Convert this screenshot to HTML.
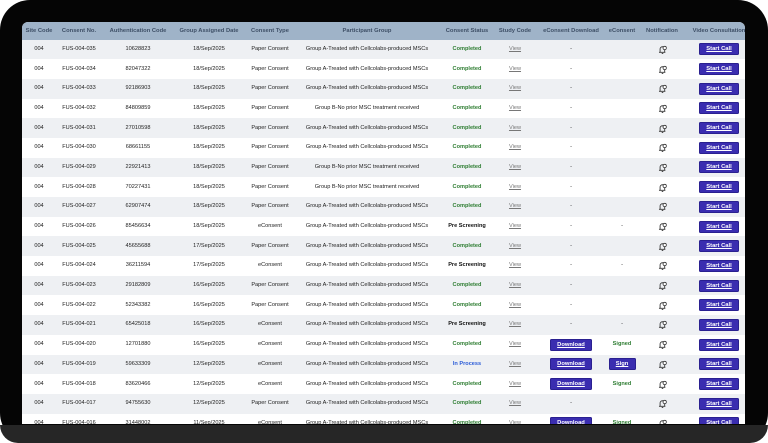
<!DOCTYPE html><html><head><meta charset="utf-8"><style>
html,body{margin:0;padding:0;width:768px;height:443px;overflow:hidden;background:#fff;font-family:"Liberation Sans",Arial,sans-serif}
.dev{position:absolute;left:0;top:0;width:768px;height:443px;background:#050505;border-radius:30px}
.bot{position:absolute;left:0;top:425px;width:768px;height:18px;background:#262626;border-radius:0 0 30px 30px}
.scr{position:absolute;left:22px;top:22px;width:723px;height:402px;overflow:hidden;background:#fff;border-radius:6px 6px 0 0}
table{border-collapse:collapse;table-layout:fixed;width:728px}
th{background:#9fb3c8;color:#3e4f66;font-size:5.8px;font-weight:bold;height:17.5px;line-height:6px;padding:0;text-align:center;white-space:nowrap}
td{font-size:5.6px;line-height:7px;color:#222;height:19.7px;padding:0;text-align:center;white-space:nowrap;overflow:visible;border:0;box-sizing:border-box}
tr:nth-child(even) td{background:#eef0f3}
.c{color:#2e7d32;font-weight:bold}.p{color:#111;font-weight:bold}.i{color:#2a5bd7;font-weight:bold}
.v{color:#777;text-decoration:underline}
.b{display:inline-block;background:#3a2db0;color:#fff;font-weight:bold;text-decoration:underline;height:10px;line-height:10px;border-radius:1.5px;border:0.5px solid #2a2090;font-size:5.8px}
.sc{width:38px}.dl{width:40px}.sg{width:25px}
.s{color:#2e7d32;font-weight:bold}
svg{vertical-align:middle}
</style></head><body><div class="dev"></div><div class="bot"></div><div class="scr"><table>
<colgroup><col style="width:34px"><col style="width:46px"><col style="width:72px"><col style="width:70px"><col style="width:52px"><col style="width:142px"><col style="width:58px"><col style="width:38px"><col style="width:74px"><col style="width:28px"><col style="width:52px"><col style="width:62px"></colgroup>
<tr><th>Site Code</th><th>Consent No.</th><th>Authentication Code</th><th>Group Assigned Date</th><th>Consent Type</th><th>Participant Group</th><th>Consent Status</th><th>Study Code</th><th>eConsent Download</th><th>eConsent</th><th>Notification</th><th>Video Consultation</th></tr>
<tr><td>004</td><td>FUS-004-035</td><td>10628823</td><td>18/Sep/2025</td><td>Paper Consent</td><td>Group A-Treated with Cellcolabs-produced MSCs</td><td class="c">Completed</td><td class="v">View</td><td>-</td><td></td><td><svg width="11" height="11" viewBox="0 0 10 10"><path d="M1.8 7.6h5.8M2.8 7.6V4.6a2.1 2.1 0 0 1 4.2 0v3M4.3 8.7h1.4" fill="none" stroke="#333" stroke-width="0.8"/><circle cx="7" cy="3.6" r="1.5" fill="#fff" stroke="#333" stroke-width="0.7"/></svg></td><td><span class="b sc">Start Call</span></td></tr>
<tr><td>004</td><td>FUS-004-034</td><td>82047322</td><td>18/Sep/2025</td><td>Paper Consent</td><td>Group A-Treated with Cellcolabs-produced MSCs</td><td class="c">Completed</td><td class="v">View</td><td>-</td><td></td><td><svg width="11" height="11" viewBox="0 0 10 10"><path d="M1.8 7.6h5.8M2.8 7.6V4.6a2.1 2.1 0 0 1 4.2 0v3M4.3 8.7h1.4" fill="none" stroke="#333" stroke-width="0.8"/><circle cx="7" cy="3.6" r="1.5" fill="#fff" stroke="#333" stroke-width="0.7"/></svg></td><td><span class="b sc">Start Call</span></td></tr>
<tr><td>004</td><td>FUS-004-033</td><td>92186903</td><td>18/Sep/2025</td><td>Paper Consent</td><td>Group A-Treated with Cellcolabs-produced MSCs</td><td class="c">Completed</td><td class="v">View</td><td>-</td><td></td><td><svg width="11" height="11" viewBox="0 0 10 10"><path d="M1.8 7.6h5.8M2.8 7.6V4.6a2.1 2.1 0 0 1 4.2 0v3M4.3 8.7h1.4" fill="none" stroke="#333" stroke-width="0.8"/><circle cx="7" cy="3.6" r="1.5" fill="#fff" stroke="#333" stroke-width="0.7"/></svg></td><td><span class="b sc">Start Call</span></td></tr>
<tr><td>004</td><td>FUS-004-032</td><td>84809859</td><td>18/Sep/2025</td><td>Paper Consent</td><td>Group B-No prior MSC treatment received</td><td class="c">Completed</td><td class="v">View</td><td>-</td><td></td><td><svg width="11" height="11" viewBox="0 0 10 10"><path d="M1.8 7.6h5.8M2.8 7.6V4.6a2.1 2.1 0 0 1 4.2 0v3M4.3 8.7h1.4" fill="none" stroke="#333" stroke-width="0.8"/><circle cx="7" cy="3.6" r="1.5" fill="#fff" stroke="#333" stroke-width="0.7"/></svg></td><td><span class="b sc">Start Call</span></td></tr>
<tr><td>004</td><td>FUS-004-031</td><td>27010598</td><td>18/Sep/2025</td><td>Paper Consent</td><td>Group A-Treated with Cellcolabs-produced MSCs</td><td class="c">Completed</td><td class="v">View</td><td>-</td><td></td><td><svg width="11" height="11" viewBox="0 0 10 10"><path d="M1.8 7.6h5.8M2.8 7.6V4.6a2.1 2.1 0 0 1 4.2 0v3M4.3 8.7h1.4" fill="none" stroke="#333" stroke-width="0.8"/><circle cx="7" cy="3.6" r="1.5" fill="#fff" stroke="#333" stroke-width="0.7"/></svg></td><td><span class="b sc">Start Call</span></td></tr>
<tr><td>004</td><td>FUS-004-030</td><td>68661155</td><td>18/Sep/2025</td><td>Paper Consent</td><td>Group A-Treated with Cellcolabs-produced MSCs</td><td class="c">Completed</td><td class="v">View</td><td>-</td><td></td><td><svg width="11" height="11" viewBox="0 0 10 10"><path d="M1.8 7.6h5.8M2.8 7.6V4.6a2.1 2.1 0 0 1 4.2 0v3M4.3 8.7h1.4" fill="none" stroke="#333" stroke-width="0.8"/><circle cx="7" cy="3.6" r="1.5" fill="#fff" stroke="#333" stroke-width="0.7"/></svg></td><td><span class="b sc">Start Call</span></td></tr>
<tr><td>004</td><td>FUS-004-029</td><td>22921413</td><td>18/Sep/2025</td><td>Paper Consent</td><td>Group B-No prior MSC treatment received</td><td class="c">Completed</td><td class="v">View</td><td>-</td><td></td><td><svg width="11" height="11" viewBox="0 0 10 10"><path d="M1.8 7.6h5.8M2.8 7.6V4.6a2.1 2.1 0 0 1 4.2 0v3M4.3 8.7h1.4" fill="none" stroke="#333" stroke-width="0.8"/><circle cx="7" cy="3.6" r="1.5" fill="#fff" stroke="#333" stroke-width="0.7"/></svg></td><td><span class="b sc">Start Call</span></td></tr>
<tr><td>004</td><td>FUS-004-028</td><td>70227431</td><td>18/Sep/2025</td><td>Paper Consent</td><td>Group B-No prior MSC treatment received</td><td class="c">Completed</td><td class="v">View</td><td>-</td><td></td><td><svg width="11" height="11" viewBox="0 0 10 10"><path d="M1.8 7.6h5.8M2.8 7.6V4.6a2.1 2.1 0 0 1 4.2 0v3M4.3 8.7h1.4" fill="none" stroke="#333" stroke-width="0.8"/><circle cx="7" cy="3.6" r="1.5" fill="#fff" stroke="#333" stroke-width="0.7"/></svg></td><td><span class="b sc">Start Call</span></td></tr>
<tr><td>004</td><td>FUS-004-027</td><td>62907474</td><td>18/Sep/2025</td><td>Paper Consent</td><td>Group A-Treated with Cellcolabs-produced MSCs</td><td class="c">Completed</td><td class="v">View</td><td>-</td><td></td><td><svg width="11" height="11" viewBox="0 0 10 10"><path d="M1.8 7.6h5.8M2.8 7.6V4.6a2.1 2.1 0 0 1 4.2 0v3M4.3 8.7h1.4" fill="none" stroke="#333" stroke-width="0.8"/><circle cx="7" cy="3.6" r="1.5" fill="#fff" stroke="#333" stroke-width="0.7"/></svg></td><td><span class="b sc">Start Call</span></td></tr>
<tr><td>004</td><td>FUS-004-026</td><td>85456634</td><td>18/Sep/2025</td><td>eConsent</td><td>Group A-Treated with Cellcolabs-produced MSCs</td><td class="p">Pre Screening</td><td class="v">View</td><td>-</td><td>-</td><td><svg width="11" height="11" viewBox="0 0 10 10"><path d="M1.8 7.6h5.8M2.8 7.6V4.6a2.1 2.1 0 0 1 4.2 0v3M4.3 8.7h1.4" fill="none" stroke="#333" stroke-width="0.8"/><circle cx="7" cy="3.6" r="1.5" fill="#fff" stroke="#333" stroke-width="0.7"/></svg></td><td><span class="b sc">Start Call</span></td></tr>
<tr><td>004</td><td>FUS-004-025</td><td>45655688</td><td>17/Sep/2025</td><td>Paper Consent</td><td>Group A-Treated with Cellcolabs-produced MSCs</td><td class="c">Completed</td><td class="v">View</td><td>-</td><td></td><td><svg width="11" height="11" viewBox="0 0 10 10"><path d="M1.8 7.6h5.8M2.8 7.6V4.6a2.1 2.1 0 0 1 4.2 0v3M4.3 8.7h1.4" fill="none" stroke="#333" stroke-width="0.8"/><circle cx="7" cy="3.6" r="1.5" fill="#fff" stroke="#333" stroke-width="0.7"/></svg></td><td><span class="b sc">Start Call</span></td></tr>
<tr><td>004</td><td>FUS-004-024</td><td>36211594</td><td>17/Sep/2025</td><td>eConsent</td><td>Group A-Treated with Cellcolabs-produced MSCs</td><td class="p">Pre Screening</td><td class="v">View</td><td>-</td><td>-</td><td><svg width="11" height="11" viewBox="0 0 10 10"><path d="M1.8 7.6h5.8M2.8 7.6V4.6a2.1 2.1 0 0 1 4.2 0v3M4.3 8.7h1.4" fill="none" stroke="#333" stroke-width="0.8"/><circle cx="7" cy="3.6" r="1.5" fill="#fff" stroke="#333" stroke-width="0.7"/></svg></td><td><span class="b sc">Start Call</span></td></tr>
<tr><td>004</td><td>FUS-004-023</td><td>29182809</td><td>16/Sep/2025</td><td>Paper Consent</td><td>Group A-Treated with Cellcolabs-produced MSCs</td><td class="c">Completed</td><td class="v">View</td><td>-</td><td></td><td><svg width="11" height="11" viewBox="0 0 10 10"><path d="M1.8 7.6h5.8M2.8 7.6V4.6a2.1 2.1 0 0 1 4.2 0v3M4.3 8.7h1.4" fill="none" stroke="#333" stroke-width="0.8"/><circle cx="7" cy="3.6" r="1.5" fill="#fff" stroke="#333" stroke-width="0.7"/></svg></td><td><span class="b sc">Start Call</span></td></tr>
<tr><td>004</td><td>FUS-004-022</td><td>52343382</td><td>16/Sep/2025</td><td>Paper Consent</td><td>Group A-Treated with Cellcolabs-produced MSCs</td><td class="c">Completed</td><td class="v">View</td><td>-</td><td></td><td><svg width="11" height="11" viewBox="0 0 10 10"><path d="M1.8 7.6h5.8M2.8 7.6V4.6a2.1 2.1 0 0 1 4.2 0v3M4.3 8.7h1.4" fill="none" stroke="#333" stroke-width="0.8"/><circle cx="7" cy="3.6" r="1.5" fill="#fff" stroke="#333" stroke-width="0.7"/></svg></td><td><span class="b sc">Start Call</span></td></tr>
<tr><td>004</td><td>FUS-004-021</td><td>65425018</td><td>16/Sep/2025</td><td>eConsent</td><td>Group A-Treated with Cellcolabs-produced MSCs</td><td class="p">Pre Screening</td><td class="v">View</td><td>-</td><td>-</td><td><svg width="11" height="11" viewBox="0 0 10 10"><path d="M1.8 7.6h5.8M2.8 7.6V4.6a2.1 2.1 0 0 1 4.2 0v3M4.3 8.7h1.4" fill="none" stroke="#333" stroke-width="0.8"/><circle cx="7" cy="3.6" r="1.5" fill="#fff" stroke="#333" stroke-width="0.7"/></svg></td><td><span class="b sc">Start Call</span></td></tr>
<tr><td>004</td><td>FUS-004-020</td><td>12701880</td><td>16/Sep/2025</td><td>eConsent</td><td>Group A-Treated with Cellcolabs-produced MSCs</td><td class="c">Completed</td><td class="v">View</td><td><span class="b dl">Download</span></td><td class="s">Signed</td><td><svg width="11" height="11" viewBox="0 0 10 10"><path d="M1.8 7.6h5.8M2.8 7.6V4.6a2.1 2.1 0 0 1 4.2 0v3M4.3 8.7h1.4" fill="none" stroke="#333" stroke-width="0.8"/><circle cx="7" cy="3.6" r="1.5" fill="#fff" stroke="#333" stroke-width="0.7"/></svg></td><td><span class="b sc">Start Call</span></td></tr>
<tr><td>004</td><td>FUS-004-019</td><td>59633309</td><td>12/Sep/2025</td><td>eConsent</td><td>Group A-Treated with Cellcolabs-produced MSCs</td><td class="i">In Process</td><td class="v">View</td><td><span class="b dl">Download</span></td><td><span class="b sg">Sign</span></td><td><svg width="11" height="11" viewBox="0 0 10 10"><path d="M1.8 7.6h5.8M2.8 7.6V4.6a2.1 2.1 0 0 1 4.2 0v3M4.3 8.7h1.4" fill="none" stroke="#333" stroke-width="0.8"/><circle cx="7" cy="3.6" r="1.5" fill="#fff" stroke="#333" stroke-width="0.7"/></svg></td><td><span class="b sc">Start Call</span></td></tr>
<tr><td>004</td><td>FUS-004-018</td><td>83620466</td><td>12/Sep/2025</td><td>eConsent</td><td>Group A-Treated with Cellcolabs-produced MSCs</td><td class="c">Completed</td><td class="v">View</td><td><span class="b dl">Download</span></td><td class="s">Signed</td><td><svg width="11" height="11" viewBox="0 0 10 10"><path d="M1.8 7.6h5.8M2.8 7.6V4.6a2.1 2.1 0 0 1 4.2 0v3M4.3 8.7h1.4" fill="none" stroke="#333" stroke-width="0.8"/><circle cx="7" cy="3.6" r="1.5" fill="#fff" stroke="#333" stroke-width="0.7"/></svg></td><td><span class="b sc">Start Call</span></td></tr>
<tr><td>004</td><td>FUS-004-017</td><td>94755630</td><td>12/Sep/2025</td><td>Paper Consent</td><td>Group A-Treated with Cellcolabs-produced MSCs</td><td class="c">Completed</td><td class="v">View</td><td>-</td><td></td><td><svg width="11" height="11" viewBox="0 0 10 10"><path d="M1.8 7.6h5.8M2.8 7.6V4.6a2.1 2.1 0 0 1 4.2 0v3M4.3 8.7h1.4" fill="none" stroke="#333" stroke-width="0.8"/><circle cx="7" cy="3.6" r="1.5" fill="#fff" stroke="#333" stroke-width="0.7"/></svg></td><td><span class="b sc">Start Call</span></td></tr>
<tr><td>004</td><td>FUS-004-016</td><td>31448002</td><td>11/Sep/2025</td><td>eConsent</td><td>Group A-Treated with Cellcolabs-produced MSCs</td><td class="c">Completed</td><td class="v">View</td><td><span class="b dl">Download</span></td><td class="s">Signed</td><td><svg width="11" height="11" viewBox="0 0 10 10"><path d="M1.8 7.6h5.8M2.8 7.6V4.6a2.1 2.1 0 0 1 4.2 0v3M4.3 8.7h1.4" fill="none" stroke="#333" stroke-width="0.8"/><circle cx="7" cy="3.6" r="1.5" fill="#fff" stroke="#333" stroke-width="0.7"/></svg></td><td><span class="b sc">Start Call</span></td></tr>
</table></div></body></html>
